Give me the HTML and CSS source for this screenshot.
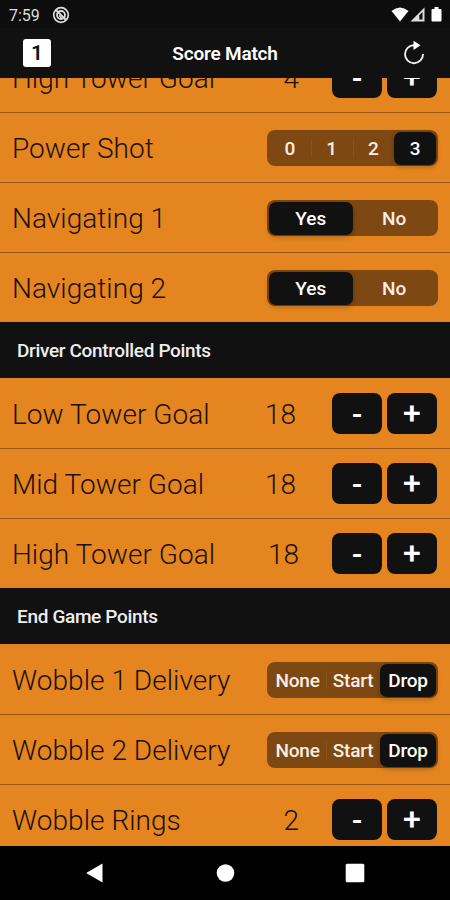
FILE: index.html
```
<!DOCTYPE html>
<html lang="en">
<head>
    <meta charset="UTF-8">
    <meta name="viewport" content="width=device-width, initial-scale=1.0">
    <title>Score Match</title>
    <link rel="stylesheet" href="styles.css">
</head>
<body>
    <div class="status-bar">
        <span class="time">7:59</span>
        <svg class="status-app" width="18" height="18" viewBox="0 0 18 18" fill="none" stroke="#ddd">
            <circle cx="9" cy="9" r="7.3" stroke-width="1.7"/>
            <circle cx="9" cy="9" r="4" stroke-width="1.8"/>
            <path d="M4 4l10 10" stroke-width="1.8"/>
            <path d="M7 9.5l2.5 2.5" stroke-width="1.5"/>
        </svg>
        <svg class="status-icons" width="54" height="18" viewBox="0 0 54 18">
            <path d="M0.5 6Q9 -1 17.500 6L9 16.500z" fill="#fff"/>
            <path d="M19.5 16.5L33.5 2.500V16.5z" fill="#ddd"/>
            <path d="M28.3 10.3L31.5 7.1V14.5H28.3z" fill="#111"/>
            <path d="M41.5 4h2V2h4v2H49.5q1 0 1 1v10.500q0 1-1 1h-8q-1 0-1-1V5q0-1 1-1z" fill="#fff"/>
        </svg>
    </div>
    <div class="header">
        <div class="match-badge">1</div>
        <h1>Score Match</h1>
        <svg class="refresh" width="24" height="26" viewBox="0 0 24 26">
            <path d="M12 5.2A9 9 0 1 0 21 14" fill="none" stroke="#eee" stroke-width="1.9"/>
            <path d="M11.5 0.8L18.5 5.3L11.5 10z" fill="#fff"/>
        </svg>
    </div>

    <div class="content">
        <div class="list">
            <div class="row">
                <span class="label">High Tower Goal</span>
                <span class="value value-near">4</span>
                <div class="stepper"><button class="minus">-</button><button class="plus">+</button></div>
            </div>
            <div class="row">
                <span class="label">Power Shot</span>
                <div class="segments four">
                    <span>0</span><span>1</span><span>2</span><span class="selected">3</span>
                </div>
            </div>
            <div class="row">
                <span class="label">Navigating 1</span>
                <div class="segments two">
                    <span class="selected">Yes</span><span>No</span>
                </div>
            </div>
            <div class="row last">
                <span class="label">Navigating 2</span>
                <div class="segments two">
                    <span class="selected">Yes</span><span>No</span>
                </div>
            </div>

            <h2>Driver Controlled Points</h2>
            <div class="row">
                <span class="label">Low Tower Goal</span>
                <span class="value">18</span>
                <div class="stepper"><button class="minus">-</button><button class="plus">+</button></div>
            </div>
            <div class="row">
                <span class="label">Mid Tower Goal</span>
                <span class="value">18</span>
                <div class="stepper"><button class="minus">-</button><button class="plus">+</button></div>
            </div>
            <div class="row last">
                <span class="label">High Tower Goal</span>
                <span class="value value-near">18</span>
                <div class="stepper"><button class="minus">-</button><button class="plus">+</button></div>
            </div>

            <h2>End Game Points</h2>
            <div class="row">
                <span class="label">Wobble 1 Delivery</span>
                <div class="segments three">
                    <span>None</span><span>Start</span><span class="selected">Drop</span>
                </div>
            </div>
            <div class="row">
                <span class="label">Wobble 2 Delivery</span>
                <div class="segments three">
                    <span>None</span><span>Start</span><span class="selected">Drop</span>
                </div>
            </div>
            <div class="row">
                <span class="label">Wobble Rings</span>
                <span class="value value-near">2</span>
                <div class="stepper"><button class="minus">-</button><button class="plus">+</button></div>
            </div>
        </div>
    </div>

    <div class="nav-bar">
        <svg width="20" height="20" viewBox="0 0 20 20"><path d="M1 9.4L16.5 0.6V19.4L1 10.6Q0 10 1 9.4z" fill="#fff"/></svg>
        <svg width="20" height="20" viewBox="0 0 20 20"><circle cx="9.5" cy="10" r="8.8" fill="#fff"/></svg>
        <svg width="20" height="20" viewBox="0 0 20 20"><rect x="0.7" y="0.7" width="18.6" height="18.6" rx="1.5" fill="#fff"/></svg>
    </div>
</body>
</html>
```
FILE: styles.css
```
* {
    box-sizing: border-box;
}

body {
    font-family: Roboto, "Liberation Sans", sans-serif;
    margin: 0;
    height: 900px;
    display: flex;
    flex-direction: column;
    overflow: hidden;
    background-color: #111;
    color: #fff;
}

.status-bar {
    height: 28px;
    padding: 0 5px 0 9px;
    display: flex;
    align-items: center;
    background-color: #0d0d0d;
}

.time {
    width: 43px;
    padding-top: 2px;
    font-size: 16px;
    color: #ddd;
}

.status-app {
    margin-top: 1px;
}

.status-icons {
    margin-left: auto;
}

.header {
    height: 50px;
    padding: 0 24px 0 23px;
    display: grid;
    grid-template-columns: 28px 1fr 24px;
    align-items: center;
}

.match-badge {
    height: 28px;
    border-radius: 3px;
    background-color: #fff;
    color: #111;
    font-size: 21px;
    font-weight: 600;
    line-height: 28px;
    text-align: center;
}

h1 {
    margin: 0;
    padding-right: 3px;
    font-size: 19px;
    font-weight: 600;
    letter-spacing: -0.2px;
    text-align: center;
}

.content {
    flex: 1;
    overflow: hidden;
    background-color: #e5851f;
}

/* list is scrolled part of a row down */
.list {
    margin-top: -35px;
}

.row {
    height: 70px;
    padding: 0 13px 0 12px;
    display: flex;
    align-items: center;
    border-bottom: 1px solid #975511;
    color: #1b1006;
}

.last {
    height: 69px;
    border-bottom: none;
}

.label {
    flex: 1;
    padding-top: 1px;
    font-size: 28px;
    font-weight: 350;
    letter-spacing: 0.05px;
    white-space: nowrap;
}

.value {
    margin-right: 36px;
    padding-top: 1px;
    font-size: 28px;
    font-weight: 350;
}

.value-near {
    margin-right: 33px;
}

h2 {
    height: 56px;
    margin: 0;
    padding: 1px 17px 0;
    background-color: #111;
    color: #eee;
    font-size: 19px;
    font-weight: 500;
    line-height: 56px;
    letter-spacing: -0.34px;
}

h2 + .row {
    height: 71px;
    padding-top: 1px;
}

.stepper {
    display: flex;
    gap: 5px;
}

button {
    width: 50px;
    height: 41px;
    padding: 0;
    border: none;
    border-radius: 8px;
    background-color: #111;
    color: #fff;
    font-family: inherit;
    font-size: 29px;
    font-weight: 600;
    line-height: 41px;
}

.minus {
    padding-top: 2px;
}

.plus {
    font-size: 32px;
    font-weight: 500;
}

.segments {
    width: 171px;
    height: 36px;
    margin-right: -1px;
    padding: 2px;
    display: grid;
    border-radius: 8px;
    background-color: #7d4811;
    color: #fbeee6;
    font-size: 19px;
    font-weight: 500;
    line-height: 33px;
    text-align: center;
}

.four {
    grid-template-columns: repeat(4, 1fr);
}

.three {
    grid-template-columns: 57px 54px 1fr;
    letter-spacing: -0.2px;
}

.two {
    grid-template-columns: 1fr 1fr;
}

.four span + span:not(.selected),
.three span + span:not(.selected) {
    background: linear-gradient(#8b531c, #8b531c) left center / 1px 18px no-repeat;
}

.selected {
    border-radius: 7px;
    background-color: #111;
    color: #fff;
    box-shadow: 0 2px 5px rgba(0, 0, 0, 0.25);
}

.nav-bar {
    height: 54px;
    padding: 0 85px 0 86px;
    display: flex;
    align-items: center;
    justify-content: space-between;
    background-color: #000;
}
```
